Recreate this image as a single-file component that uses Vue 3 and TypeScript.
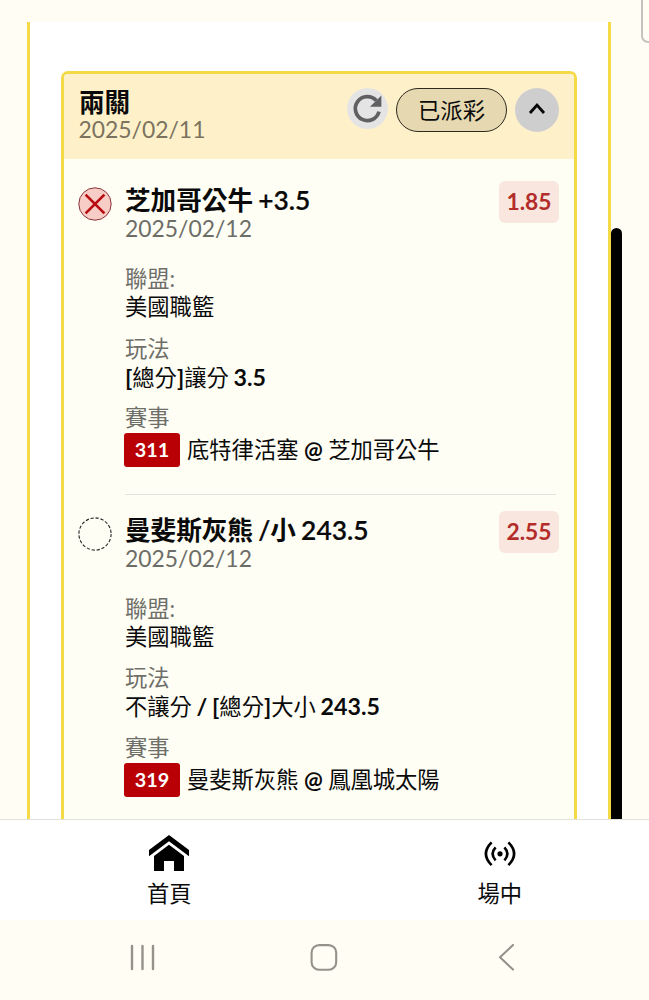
<script setup lang="ts">
interface Run {
  text: string
  strong?: boolean
}
interface Bet {
  status: 'lost' | 'void'
  title: Run[]
  date: string
  odds: string
  league: string
  play: Run[]
  code: string
  away: string
  home: string
}

const bets: Bet[] = [
  {
    status: 'lost',
    title: [{ text: '芝加哥公牛', strong: true }, { text: ' +3.5' }],
    date: '2025/02/12',
    odds: '1.85',
    league: '美國職籃',
    play: [
      { text: '[', strong: true },
      { text: '總分' },
      { text: ']', strong: true },
      { text: '讓分 ' },
      { text: '3.5', strong: true },
    ],
    code: '311',
    away: '底特律活塞',
    home: '芝加哥公牛',
  },
  {
    status: 'void',
    title: [
      { text: '曼斐斯灰熊', strong: true },
      { text: ' /' },
      { text: '小', strong: true },
      { text: ' 243.5' },
    ],
    date: '2025/02/12',
    odds: '2.55',
    league: '美國職籃',
    play: [
      { text: '不讓分 ' },
      { text: '/ [', strong: true },
      { text: '總分' },
      { text: ']', strong: true },
      { text: '大小 ' },
      { text: '243.5', strong: true },
    ],
    code: '319',
    away: '曼斐斯灰熊',
    home: '鳳凰城太陽',
  },
]
</script>

<template>
  <div class="screen">
    <main class="viewport">
      <div class="panel">
        <section class="card">
          <header class="head">
            <div class="head-text">
              <div class="title"><b>兩關</b></div>
              <div class="date">2025/02/11</div>
            </div>
            <div class="actions">
              <button class="refresh" aria-label="refresh">
                <svg width="41" height="41" viewBox="0 0 41 41">
                  <path d="M32 23.6A12 12 0 1 1 29.3 12.6" fill="none" stroke="#606062" stroke-width="3.7" />
                  <path d="M34.4 7.4V18.8H23Z" fill="#606062" />
                </svg>
              </button>
              <span class="state">已派彩</span>
              <button class="toggle" aria-label="collapse">
                <svg width="44" height="44" viewBox="0 0 44 44">
                  <path d="M15 25L22 17.1L29 25" fill="none" stroke="#080808" stroke-width="2.9" />
                </svg>
              </button>
            </div>
          </header>

          <article v-for="bet in bets" :key="bet.code" class="bet">
            <svg class="mark" width="34" height="34" viewBox="0 0 34 34">
              <template v-if="bet.status === 'lost'">
                <circle cx="17" cy="17" r="16.2" fill="#f8cdc6" stroke="#87333a" stroke-width="1" />
                <path d="M7.6 7.6L26.4 26.4M26.4 7.6L7.6 26.4" stroke="#b80d12" stroke-width="2.7" />
              </template>
              <circle v-else cx="17" cy="17" r="16.1" fill="none" stroke="#222" stroke-width="1.1" stroke-dasharray="3.3 1.76" />
            </svg>
            <div class="body">
              <div class="top">
                <div>
                  <div class="title"><span v-for="(run, i) in bet.title" :key="i" :class="run.strong ? 'heavy' : 'line'">{{ run.text }}</span></div>
                  <div class="date">{{ bet.date }}</div>
                </div>
                <span class="odds">{{ bet.odds }}</span>
              </div>
              <dl class="facts">
                <div class="fact">
                  <dt>聯盟:</dt>
                  <dd>{{ bet.league }}</dd>
                </div>
                <div class="fact">
                  <dt>玩法</dt>
                  <dd class="play"><span v-for="(run, i) in bet.play" :key="i" :class="{ strong: run.strong }">{{ run.text }}</span></dd>
                </div>
                <div class="fact">
                  <dt>賽事</dt>
                  <dd class="match">
                    <span class="code">{{ bet.code }}</span>
                    <span class="teams">{{ bet.away }} <span class="at">@</span> {{ bet.home }}</span>
                  </dd>
                </div>
              </dl>
            </div>
          </article>
        </section>
      </div>
      <div class="thumb"></div>
      <div class="edge-box"></div>
    </main>

    <nav class="tabs">
      <a class="tab home">
        <svg width="42" height="40" viewBox="0 0 42 40">
          <path d="M21 2L41 17V23.2L21 8.2L1 23.2V17Z" />
          <path d="M21 11.8L36 23V38H26V28H16V38H6V23Z" />
        </svg>
        <span>首頁</span>
      </a>
      <a class="tab live">
        <svg width="32" height="40" viewBox="0 0 32 40" fill="none" stroke="#000" stroke-width="2.6">
          <circle cx="16" cy="20.8" r="2.6" fill="#000" stroke="none" />
          <path d="M11.6 14.3Q5.6 20.8 11.6 27.3M20.4 14.3Q26.4 20.8 20.4 27.3" />
          <path d="M7.6 9.4Q-3.8 20.8 7.6 32.2M24.4 9.4Q35.8 20.8 24.4 32.2" />
        </svg>
        <span>場中</span>
      </a>
    </nav>

    <footer class="system">
      <svg width="26" height="28" viewBox="0 0 26 28" fill="none" stroke="#93938c" stroke-width="2.4" stroke-linecap="round">
        <path d="M2 2V25M12.5 2V25M23 2V25" />
      </svg>
      <svg class="home-key" width="28" height="28" viewBox="0 0 28 28" fill="none" stroke="#93938c" stroke-width="2.1">
        <rect x="1.6" y="1.1" width="24.6" height="24.6" rx="7.5" />
      </svg>
      <svg width="17" height="28" viewBox="0 0 17 28" fill="none" stroke="#93938c" stroke-width="2.1" stroke-linecap="round" stroke-linejoin="round">
        <path d="M15 1L2 13.3L15 25.6" />
      </svg>
    </footer>
  </div>
</template>

<style>
body {
  margin: 0;
  background: #fffdf4;
}
</style>

<style scoped>
.screen {
  box-sizing: border-box;
  width: 649px;
  height: 1000px;
  display: flex;
  flex-direction: column;
  overflow: hidden;
  background: #fffdf4;
  color: #0a0a0a;
  font-family: Lato, "Noto Sans CJK TC", sans-serif;
  font-size: 22.3px;
  line-height: 28px;
  white-space: pre;
}
.viewport {
  position: relative;
  box-sizing: border-box;
  height: 819px;
  padding: 22px 38px 0 27px;
  overflow: hidden;
}
.panel {
  box-sizing: border-box;
  height: 860px;
  padding: 49px 31px 0;
  border: solid #f5da48;
  border-width: 0 3px;
  background: #fff;
}
.card {
  box-sizing: border-box;
  height: 840px;
  border: 3px solid #f5da48;
  border-radius: 7px;
  background: #fffef5;
  overflow: hidden;
}
.head {
  box-sizing: border-box;
  height: 85px;
  padding: 14px 15px 0 15px;
  display: flex;
  justify-content: space-between;
  background: #fef1ca;
}
.title {
  height: 27px;
  font-size: 25.6px;
  line-height: 27px;
  font-weight: 600;
  white-space: pre;
  word-spacing: -1.4px;
}
.head .title {
  line-height: 29px;
}
.title b,
.heavy {
  font-weight: 700;
}
.line {
  font-size: 26.4px;
  -webkit-text-stroke: 0.2px currentColor;
}
.date {
  height: 29px;
  font-size: 22.9px;
  color: #6d6d68;
}
.head .date {
  margin-left: -0.5px;
  color: #7b735f;
}
.actions {
  display: flex;
  align-items: flex-start;
}
button {
  padding: 0;
  border: 0;
  border-radius: 50%;
}
button svg {
  display: block;
}
.refresh {
  width: 41px;
  height: 41px;
  margin-right: 8px;
  background: #e4e4e5;
}
.state {
  box-sizing: border-box;
  width: 111px;
  height: 44px;
  margin-right: 8px;
  border: 1.3px solid #2e2a1e;
  border-radius: 22px;
  background: #e6d9b1;
  line-height: 43px;
  text-align: center;
}
.toggle {
  width: 44px;
  height: 44px;
  background: #cfcecf;
}
.bet {
  display: flex;
  height: 329.5px;
  padding: 0 15px 0 14px;
}
.mark {
  flex: none;
  margin: 28px 13px 0 0;
}
.body {
  box-sizing: border-box;
  flex: 1;
  padding-top: 28px;
}
.bet:not(:last-child) .body {
  height: 336px;
  background: linear-gradient(#e4e3dd, #e4e3dd) 0 335px / calc(100% - 3px) 1px no-repeat;
}
.top {
  display: flex;
  justify-content: space-between;
}
.odds {
  box-sizing: border-box;
  width: 60px;
  height: 42px;
  margin-top: -6px;
  border-radius: 6px;
  background: #f8e6df;
  color: #b22d29;
  font-size: 22.8px;
  font-weight: 700;
  line-height: 41px;
  text-align: center;
}
.facts {
  margin: 22px 0 0;
  display: flex;
  flex-direction: column;
  gap: 13.5px;
}
dt {
  color: #6f6f6a;
}
dd {
  margin: 0;
}
.play {
  height: 28px;
  word-spacing: -1px;
}
.strong {
  font-size: 23.2px;
  font-weight: 700;
}
.at {
  font-weight: 700;
}
.match {
  display: flex;
  align-items: center;
  gap: 7px;
  margin-top: 1px;
}
.teams {
  word-spacing: -0.3px;
}
.code {
  width: 56px;
  height: 34px;
  margin-left: -1px;
  border-radius: 3px;
  background: #b90004;
  color: #fff;
  font-size: 19.8px;
  font-weight: 700;
  line-height: 33px;
  text-align: center;
}
.thumb {
  position: absolute;
  left: 611px;
  top: 228px;
  width: 11px;
  height: 620px;
  border-radius: 6px;
  background: #000;
}
.edge-box {
  position: absolute;
  left: 641px;
  top: -21px;
  width: 40px;
  height: 60px;
  border: 2px solid #c4c3be;
  border-radius: 7px;
}
.tabs {
  box-sizing: border-box;
  height: 101px;
  padding: 0 127px 0 147px;
  display: flex;
  justify-content: space-between;
  border-top: 1px solid #e2e2dc;
  background: #fff;
}
.tab {
  display: flex;
  flex-direction: column;
  align-items: center;
  padding-top: 13px;
}
.tab span {
  margin-top: 7px;
}
.system {
  box-sizing: border-box;
  flex: 1;
  display: flex;
  justify-content: space-between;
  align-items: flex-start;
  padding: 24px 134px 0 129.5px;
}
.home-key {
  margin-right: 6px;
}
</style>
